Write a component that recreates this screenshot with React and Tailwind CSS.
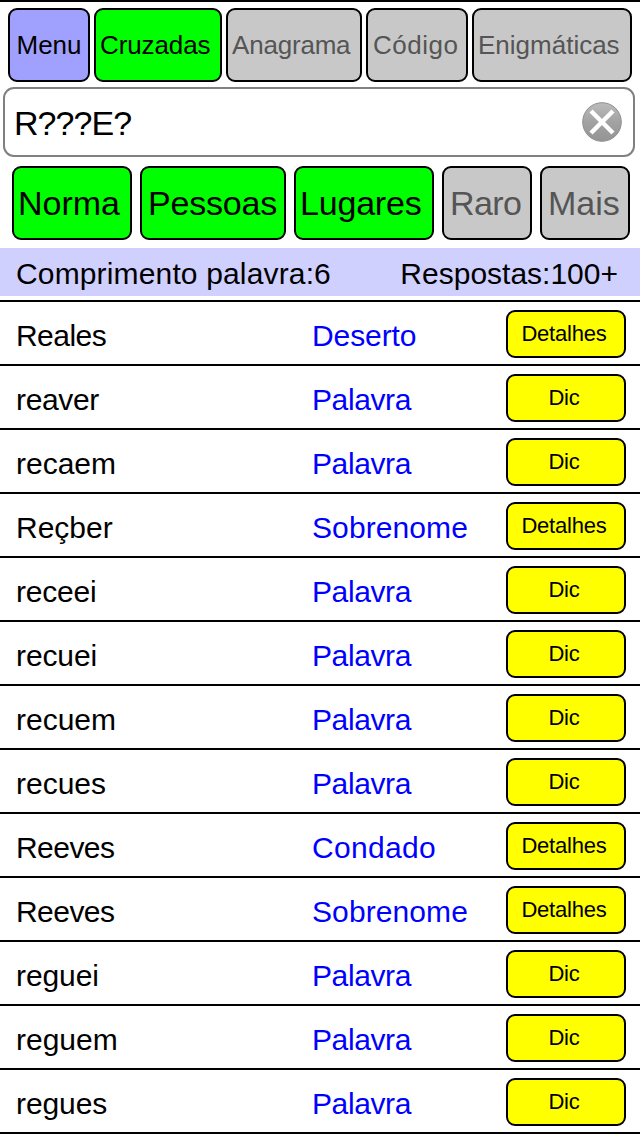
import { useState } from "react";

const modes = [
  { label: "Menu", className: "w-[82px] pl-[6.5px] bg-[#a0a0ff] text-black" },
  { label: "Cruzadas", className: "w-32 pl-1 bg-[#00ff00] text-black tracking-[-0.1px]" },
  { label: "Anagrama", className: "w-[136px] pl-1 bg-[#c8c8c8] text-[#555555] tracking-[-0.2px]" },
  { label: "Código", className: "w-[102px] pl-[5px] bg-[#c8c8c8] text-[#555555] tracking-[0.5px]" },
  { label: "Enigmáticas", className: "w-40 pl-1 bg-[#c8c8c8] text-[#555555]" },
];

const filters = [
  { label: "Norma", className: "w-[120px] pl-1 bg-[#00ff00] text-black" },
  { label: "Pessoas", className: "w-[146px] pl-[6px] bg-[#00ff00] text-black tracking-[-0.2px]" },
  { label: "Lugares", className: "w-[140px] pl-1 bg-[#00ff00] text-black tracking-[-0.2px]" },
  { label: "Raro", className: "w-[90px] pl-[6px] bg-[#c8c8c8] text-[#555555] tracking-[-0.6px]" },
  { label: "Mais", className: "w-[90px] pl-[6px] bg-[#c8c8c8] text-[#555555]" },
];

const results = [
  { word: "Reales", type: "Deserto", action: "Detalhes" },
  { word: "reaver", type: "Palavra", action: "Dic" },
  { word: "recaem", type: "Palavra", action: "Dic" },
  { word: "Reçber", type: "Sobrenome", action: "Detalhes" },
  { word: "receei", type: "Palavra", action: "Dic" },
  { word: "recuei", type: "Palavra", action: "Dic" },
  { word: "recuem", type: "Palavra", action: "Dic" },
  { word: "recues", type: "Palavra", action: "Dic" },
  { word: "Reeves", type: "Condado", action: "Detalhes" },
  { word: "Reeves", type: "Sobrenome", action: "Detalhes" },
  { word: "reguei", type: "Palavra", action: "Dic" },
  { word: "reguem", type: "Palavra", action: "Dic" },
  { word: "regues", type: "Palavra", action: "Dic" },
];

// letter spacing per label, words not listed use the normal one
const tracking = {
  Reales: "tracking-[-0.55px]",
  Reeves: "tracking-[-0.55px]",
  reaver: "tracking-[-0.35px]",
  receei: "tracking-[-0.2px]",
  recuei: "tracking-[-0.1px]",
  reguei: "tracking-[-0.1px]",
  regues: "tracking-[-0.1px]",
  Palavra: "tracking-[-0.4px]",
  Deserto: "tracking-[-0.1px]",
  Sobrenome: "tracking-[0.1px]",
  Condado: "tracking-[0.3px]",
  Detalhes: "tracking-[-0.2px]",
  Dic: "tracking-[-0.2px]",
};

function ClearIcon() {
  return (
    <svg viewBox="0 0 40 40" className="h-10 w-10">
      <defs>
        <linearGradient id="clear" x1="0" y1="0" x2="0" y2="1">
          <stop offset="0" stopColor="#bcbcbc" />
          <stop offset="0.5" stopColor="#a2a2a2" />
          <stop offset="1" stopColor="#949494" />
        </linearGradient>
      </defs>
      <circle cx="20" cy="20" r="19.3" fill="url(#clear)" stroke="#8e8e8e" strokeWidth="1" />
      <path d="M9 9 L31 31 M31 9 L9 31" stroke="#ffffff" strokeWidth="4.4" />
    </svg>
  );
}

export default function App() {
  const [query, setQuery] = useState("R???E?");

  return (
    <div className="h-[1136px] w-[640px] overflow-hidden border-t-2 border-black bg-white font-['Liberation_Sans',Arial,sans-serif] text-black">
      <div className="flex gap-1 pt-[6px] pl-2 text-[26px]">
        {modes.map((mode) => (
          <button
            key={mode.label}
            className={`h-[74px] shrink-0 rounded-[9px] border-2 border-black text-left whitespace-nowrap ${mode.className}`}
          >
            {mode.label}
          </button>
        ))}
      </div>

      <div className="mt-[5px] mr-[5px] ml-[3px] flex h-[70px] items-center rounded-[11px] border-2 border-[#808080] pr-[11px] pl-[9px]">
        <input
          type="text"
          value={query}
          onChange={(e) => setQuery(e.target.value)}
          className="min-w-0 flex-1 pt-[2px] text-[34px] leading-10 tracking-[-0.95px] outline-none"
        />
        <button onClick={() => setQuery("")}>
          <ClearIcon />
        </button>
      </div>

      <div className="mt-[9px] flex gap-2 pl-3 text-[34px]">
        {filters.map((filter) => (
          <button
            key={filter.label}
            className={`h-[74px] shrink-0 rounded-[9px] border-2 border-black text-left whitespace-nowrap ${filter.className}`}
          >
            {filter.label}
          </button>
        ))}
      </div>

      <div className="mt-2 flex h-12 items-center justify-between bg-[#d0d0ff] pt-[3px] pr-[22px] pl-4 text-[30px] leading-9">
        <span className="tracking-[0.15px]">Comprimento palavra:6</span>
        <span>Respostas:100+</span>
      </div>

      <div className="mt-1 border-t-2 border-black">
        {results.map((row, i) => (
          <div key={i} className="flex h-16 items-center border-b-2 border-black pr-[14px] pl-4 text-[30px] leading-9">
            <span className={`w-[296px] pt-[5px] ${tracking[row.word] || ""}`}>{row.word}</span>
            <span className={`flex-1 pt-[5px] text-[#0000ff] ${tracking[row.type] || ""}`}>{row.type}</span>
            <button
              className={`mt-0.5 h-12 w-[120px] rounded-[9px] border-2 border-black bg-[#ffff00] pr-[4px] text-[22px] leading-7 ${tracking[row.action] || ""}`}
            >
              {row.action}
            </button>
          </div>
        ))}
      </div>
    </div>
  );
}
